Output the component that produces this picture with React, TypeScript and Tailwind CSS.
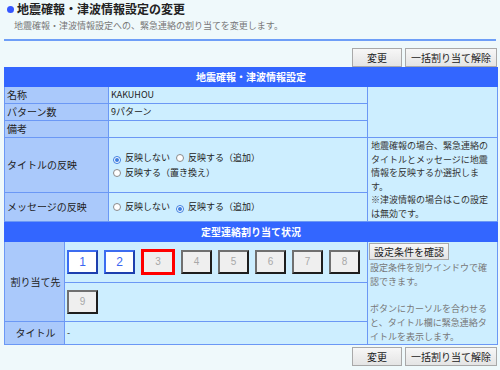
import React from "react";

const label =
  "border border-[#6b98f5] bg-[#aac9fb] text-[10px] leading-[12px] text-[#222] pl-[2px] py-0 align-middle whitespace-nowrap";
const value =
  "border border-[#6b98f5] bg-[#cdeeff] text-[9px] leading-[12px] text-[#222] pl-[2px] py-0 align-middle whitespace-nowrap";

function Radio({ checked, gap }: { checked?: boolean; gap?: boolean }) {
  const g = gap ? "ml-[6px]" : "";
  return checked ? (
    <span className={`inline-flex w-[8px] h-[8px] rounded-full border border-[#3b7de0] bg-white items-center justify-center mr-[4px] align-[-1px] ${g}`}>
      <span className="w-[4px] h-[4px] rounded-full bg-[#3b7de0]" />
    </span>
  ) : (
    <span className={`inline-block w-[8px] h-[8px] rounded-full border border-[#8a8a8a] bg-white mr-[4px] align-[-1px] ${g}`} />
  );
}

function NumBtn({ n, kind }: { n: number; kind: "blue" | "red" | "gray" }) {
  if (kind === "blue")
    return (
      <div className="w-[31px] h-[24px] flex items-center justify-center bg-white border-2 border-t-[#3c6cf0] border-l-[#3c6cf0] border-b-[#1d3fae] border-r-[#1d3fae] text-[#3a66f2] text-[12px] font-['Liberation_Sans',sans-serif]">
        {n}
      </div>
    );
  if (kind === "red")
    return (
      <div className="w-[34px] h-[26px] flex items-center justify-center bg-[#efefef] border-[3px] border-[#ff0000] text-[#a8a8a8] text-[10px] font-['Liberation_Sans',sans-serif]">
        {n}
      </div>
    );
  return (
    <div className="w-[31px] h-[24px] flex items-center justify-center bg-[#efefef] border-2 border-t-[#707070] border-l-[#707070] border-b-[#1e1e1e] border-r-[#1e1e1e] text-[#a8a8a8] text-[10px] font-['Liberation_Sans',sans-serif]">
      {n}
    </div>
  );
}

function Btn({ children, w }: { children: React.ReactNode; w: string }) {
  return (
    <div
      className={`${w} h-[19px] flex items-center justify-center bg-gradient-to-b from-[#f7f7f7] to-[#e4e4e4] border border-[#a9a9a9] text-[10px] leading-[12px] text-[#222]`}
    >
      {children}
    </div>
  );
}

export default function App() {
  return (
    <div className="w-[500px] h-[370px] overflow-hidden bg-[#eff9fb] font-['Noto_Sans_CJK_JP','Noto_Sans',sans-serif]">
      <div className="flex items-center pl-[7px] pt-[1px] h-[17px]">
        <span className="w-[7px] h-[7px] rounded-full bg-[#3456ff] mr-[3px]" />
        <span className="text-[12px] font-bold text-[#222] leading-[16px]">
          地震確報・津波情報設定の変更
        </span>
      </div>
      <div className="pl-[14px] mt-[3px] text-[9px] leading-[12px] text-[#777]">
        地震確報・津波情報設定への、緊急連絡の割り当てを変更します。
      </div>
      <div className="mx-[4px] mt-[7px] h-[2px] bg-[#6e9ef7]" />
      <div className="flex justify-end gap-[3px] pr-[3px] mt-[7px]">
        <Btn w="w-[50px]">変更</Btn>
        <Btn w="w-[92px]">一括割り当て解除</Btn>
      </div>

      <table className="ml-[4px] w-[493px] table-fixed border-collapse">
        <colgroup>
          <col className="w-[104px]" />
          <col className="w-[259px]" />
          <col className="w-[130px]" />
        </colgroup>
        <tbody>
          <tr className="h-[19px]">
            <td
              colSpan={3}
              className="border border-[#3366ff] bg-[#3366ff] text-white text-[10px] leading-[12px] p-0 font-bold text-center"
            >
              地震確報・津波情報設定
            </td>
          </tr>
          <tr className="h-[17px]">
            <td className={label}>名称</td>
            <td className={value}>KAKUHOU</td>
            <td rowSpan={3} className={value}></td>
          </tr>
          <tr className="h-[17px]">
            <td className={label}>パターン数</td>
            <td className={value}>9パターン</td>
          </tr>
          <tr className="h-[17px]">
            <td className={label}>備考</td>
            <td className={value}></td>
          </tr>
          <tr className="h-[55px]">
            <td className={label}>タイトルの反映</td>
            <td className={`${value} pl-[4px]`}>
              <div className="leading-[15px]">
                <Radio checked />
                反映しない
                <Radio gap />
                反映する（追加）
              </div>
              <div className="leading-[15px]">
                <Radio />
                反映する（置き換え）
              </div>
            </td>
            <td
              rowSpan={2}
              className="border border-[#6b98f5] bg-[#cdeeff] text-[9px] leading-[13.5px] text-[#333] align-top pl-[3px] pr-[2px] pt-[1px] pb-0"
            >
              地震確報の場合、緊急連絡のタイトルとメッセージに地震情報を反映するか選択します。
              <br />
              ※津波情報の場合はこの設定は無効です。
            </td>
          </tr>
          <tr className="h-[29px]">
            <td className={label}>メッセージの反映</td>
            <td className={`${value} pl-[4px]`}>
              <Radio />
              反映しない
              <Radio checked gap />
              反映する（追加）
            </td>
          </tr>
        </tbody>
      </table>

      <table className="ml-[4px] w-[493px] table-fixed border-collapse">
        <colgroup>
          <col className="w-[60px]" />
          <col className="w-[303px]" />
          <col className="w-[130px]" />
        </colgroup>
        <tbody>
          <tr className="h-[19px]">
            <td
              colSpan={3}
              className="border border-[#3366ff] bg-[#3366ff] text-white text-[10px] leading-[12px] p-0 font-bold text-center"
            >
              定型連絡割り当て状況
            </td>
          </tr>
          <tr className="h-[41px]">
            <td rowSpan={2} className={`${label} text-center pl-0`}>
              割り当て先
            </td>
            <td className={`${value} pl-[2px]`}>
              <div className="flex items-center gap-[6px]">
                <NumBtn n={1} kind="blue" />
                <NumBtn n={2} kind="blue" />
                <NumBtn n={3} kind="red" />
                <NumBtn n={4} kind="gray" />
                <NumBtn n={5} kind="gray" />
                <NumBtn n={6} kind="gray" />
                <NumBtn n={7} kind="gray" />
                <NumBtn n={8} kind="gray" />
              </div>
            </td>
            <td
              rowSpan={3}
              className="border border-[#6b98f5] bg-[#cdeeff] text-[9px] leading-[13.7px] text-[#777] align-top pl-[1px] pr-[2px] pt-[1px] pb-0"
            >
              <div className="inline-flex items-center h-[17px] px-[4px] bg-gradient-to-b from-[#f7f7f7] to-[#e4e4e4] border border-[#a9a9a9] text-[10px] leading-[12px] text-[#222] mb-[1px]">
                設定条件を確認
              </div>
              <div className="pl-[1px]">
                設定条件を別ウインドウで確認できます。
                <br />
                <br />
                ボタンにカーソルを合わせると、タイトル欄に緊急連絡タイトルを表示します。
              </div>
            </td>
          </tr>
          <tr className="h-[39px]">
            <td className={`${value} pl-[2px]`}>
              <NumBtn n={9} kind="gray" />
            </td>
          </tr>
          <tr className="h-[23px]">
            <td className={`${label} text-center pl-0`}>タイトル</td>
            <td className={`${value} pl-[2px]`}>-</td>
          </tr>
        </tbody>
      </table>

      <div className="flex justify-end gap-[3px] pr-[3px] mt-[2px]">
        <Btn w="w-[50px]">変更</Btn>
        <Btn w="w-[92px]">一括割り当て解除</Btn>
      </div>
    </div>
  );
}
